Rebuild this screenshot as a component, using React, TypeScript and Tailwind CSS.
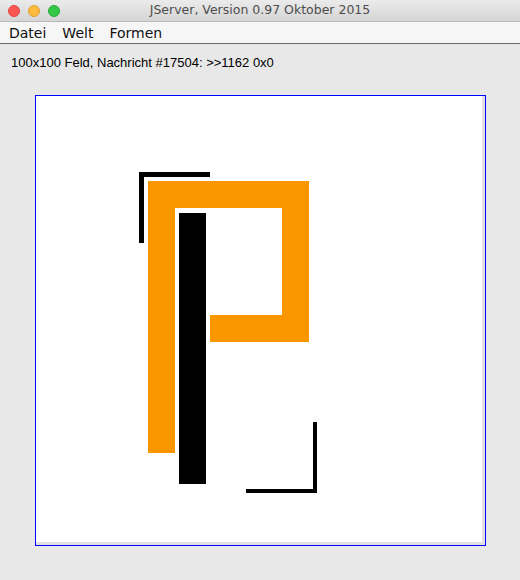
import React from "react";

export default function App() {
  const font = { fontFamily: '"Lucida Grande", "DejaVu Sans", "Liberation Sans", sans-serif' };
  return (
    <div className="w-[520px] h-[580px] bg-[#e8e8e8] flex flex-col overflow-hidden" style={font}>
      <div className="h-[22px] relative flex items-center justify-center bg-gradient-to-b from-[#ebebeb] to-[#d5d5d5] border-b border-[#b9b9b9]">
        <div className="absolute left-[8px] top-[5px] flex gap-[8px]">
          <div className="w-[12px] h-[12px] rounded-full bg-[#fc5753] border border-[#df4744]" />
          <div className="w-[12px] h-[12px] rounded-full bg-[#fdbc40] border border-[#de9f34]" />
          <div className="w-[12px] h-[12px] rounded-full bg-[#33c748] border border-[#27aa35]" />
        </div>
        <span className="text-[12.5px] text-[#4d4d4d] leading-none">JServer, Version 0.97 Oktober 2015</span>
      </div>
      <div className="h-[22px] bg-[#f6f6f6] border-b border-[#6b6b6b] flex items-center pl-[9px] gap-[16px] text-[14px] text-[#111] leading-none">
        <span>Datei</span>
        <span>Welt</span>
        <span>Formen</span>
      </div>
      <div className="pl-[11px] pt-[11px] text-[13px] text-[#000] leading-[16px]" style={{ fontFamily: '"Liberation Sans", Arial, sans-serif' }}>
        100x100 Feld, Nachricht #17504: &gt;&gt;1162 0x0
      </div>
      <div className="ml-[35px] mt-[24px] w-[451px] h-[451px] border border-[#0000ff] bg-[#e4e0e0]">
        <svg width="446" height="446" viewBox="36 96 446 446" className="block bg-white">
          <rect x="139" y="172" width="5" height="71" fill="#000" />
          <rect x="139" y="172" width="71" height="5" fill="#000" />
          <rect x="148" y="181" width="161" height="27" fill="#fa9600" />
          <rect x="148" y="181" width="27" height="272" fill="#fa9600" />
          <rect x="282" y="181" width="27" height="161" fill="#fa9600" />
          <rect x="210" y="315" width="99" height="27" fill="#fa9600" />
          <rect x="179" y="213" width="27" height="271" fill="#000" />
          <rect x="313" y="422" width="4" height="71" fill="#000" />
          <rect x="246" y="489" width="71" height="4" fill="#000" />
        </svg>
      </div>
    </div>
  );
}
